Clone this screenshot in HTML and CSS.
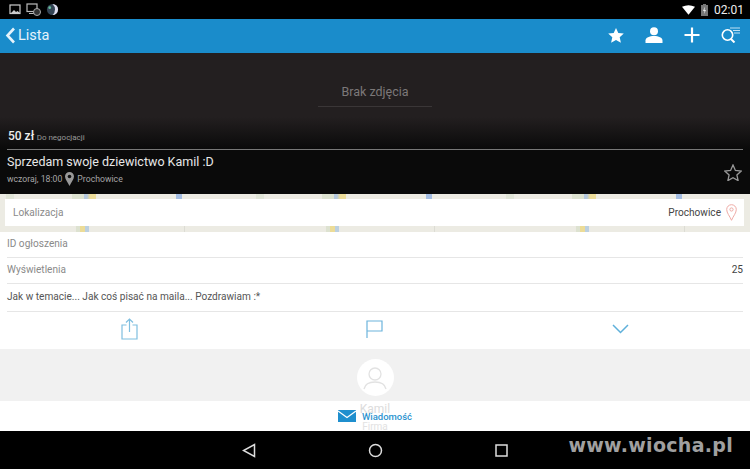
FILE: index.html
```html
<!DOCTYPE html>
<html lang="pl">
<head>
    <meta charset="UTF-8">
    <meta name="viewport" content="width=device-width, initial-scale=1.0">
    <title>Sprzedam swoje dziewictwo Kamil :D</title>
    <link rel="stylesheet" href="styles.css">
</head>
<body>
    <div class="status-bar">
        <div class="status-left">
            <svg width="12" height="11" viewBox="0 0 12 11"><rect x="1" y="1" width="10" height="8.500" fill="none" stroke="#ccc" stroke-width="1.200"/><path d="M2 9l3-3 2 2 1.500-1 2.500 2z" fill="#ccc"/></svg>
            <svg width="15" height="13" viewBox="0 0 15 13"><rect x="1" y="1" width="10" height="7.500" fill="none" stroke="#bbb" stroke-width="1.200"/><path d="M3 10.500h6" stroke="#bbb"/><circle cx="11" cy="9" r="3.500" fill="#333" stroke="#aaa"/></svg>
            <svg width="13" height="13" viewBox="0 0 14 14"><circle cx="7" cy="7" r="6" fill="#345"/><path d="M7 1a6 6 0 0 1 0 12a8 8 0 0 0 0-12z" fill="#dde"/><circle cx="4" cy="5" r="1.500" fill="#6b9"/></svg>
        </div>
        <div class="status-right">
            <svg width="13" height="10" viewBox="0 0 14 10"><path d="M0 1.500Q7-2 14 1.500L7 10z" fill="#fff"/></svg>
            <svg width="7" height="12" viewBox="0 0 7 12"><rect x="0" y="1" width="7" height="11" fill="#777"/><rect x="2" y="0" width="3" height="1" fill="#777"/><path d="M4 2.500L2 7h1.500L3 10l2-4H3.500z" fill="#eee"/></svg>
            <span class="clock">02:01</span>
        </div>
    </div>

    <header class="app-bar">
        <div class="back">
            <svg width="11" height="17" viewBox="0 0 11 17"><path d="M9 1.500L2.500 8.500 9 15.500" fill="none" stroke="#e6f3fb" stroke-width="2.600"/></svg>
            <span>Lista</span>
        </div>
        <div class="actions">
            <svg width="16" height="15" viewBox="0 0 16 15"><path d="M8 0l2.300 5 5.500.6-4.100 3.700 1.200 5.500L8 12l-4.900 2.800 1.200-5.500L.2 5.600 5.700 5z" fill="#fff"/></svg>
            <svg width="18" height="16" viewBox="0 0 18 16"><circle cx="9" cy="4.200" r="4" fill="#fff"/><path d="M.5 16v-2.500C.5 10.500 4.500 9 9 9s8.500 1.500 8.500 4.500V16z" fill="#fff"/></svg>
            <svg width="16" height="16" viewBox="0 0 16 16"><path d="M8 .5v15M.5 8h15" stroke="#fff" stroke-width="2.200"/></svg>
            <svg width="19" height="16" viewBox="0 0 19 16"><circle cx="6.500" cy="8" r="5.200" fill="none" stroke="#fff" stroke-width="1.600"/><path d="M10 12l3.500 3.500" stroke="#fff" stroke-width="2"/><path d="M9 1h10M12 3.500h7M13 6h6" stroke="#bfe0f3" stroke-width="1"/></svg>
        </div>
    </header>

    <section class="hero">
        <div class="no-photo">
            <span>Brak zdjęcia</span>
        </div>
        <div class="price-row"><b>50 zł</b> <small>Do negocjacji</small></div>
        <div class="title-block">
            <div>
                <h1>Sprzedam swoje dziewictwo Kamil :D</h1>
                <div class="meta">
                    <span>wczoraj, 18:00</span>
                    <svg width="9" height="14" viewBox="0 0 9 14"><path d="M4.500 0a4.500 4.500 0 0 1 4.500 4.500C9 7.500 6 10.500 4.500 14 3 10.500 0 7.500 0 4.500A4.500 4.500 0 0 1 4.500 0z" fill="#999"/><circle cx="4.500" cy="4.500" r="1.800" fill="#111"/></svg>
                    <span>Prochowice</span>
                </div>
            </div>
            <svg class="fav" width="18" height="17" viewBox="0 0 18 17"><path d="M9 1l2.400 5.400 5.800.6-4.300 3.900 1.200 5.700L9 13.700l-5.100 2.900 1.200-5.700L.8 7l5.800-.6z" fill="none" stroke="#999" stroke-width="1.300"/></svg>
        </div>
    </section>

    <section class="map-strip">
        <div class="location-box">
            <span class="label">Lokalizacja</span>
            <div class="location-value">
                <span>Prochowice</span>
                <svg width="11" height="17" viewBox="0 0 11 17"><path d="M5.500.7a4.800 4.800 0 0 1 4.800 4.800c0 3.500-3 6.500-4.800 10.800C3.700 12 .7 9 .7 5.500A4.800 4.800 0 0 1 5.500.7z" fill="none" stroke="#eeaaa5"/><circle cx="5.500" cy="5.500" r="1.600" fill="none" stroke="#eeaaa5"/></svg>
            </div>
        </div>
    </section>

    <section class="details">
        <div class="row"><span class="label">ID ogłoszenia</span></div>
        <div class="row"><span class="label">Wyświetlenia</span><span>25</span></div>
        <div class="row description">Jak w temacie... Jak coś pisać na maila... Pozdrawiam :*</div>
    </section>

    <div class="tools">
        <svg width="17" height="22" viewBox="0 0 17 22"><path d="M5.500 7H1v14h15V7h-4.500M8.500 14V1M5 4.500L8.500 1 12 4.500" fill="none" stroke="#7fbfe0" stroke-width="1.200"/></svg>
        <svg width="17" height="18" viewBox="0 0 17 18"><path d="M1 18V1h15v10H1" fill="none" stroke="#6cb4dc" stroke-width="1.200"/></svg>
        <svg width="17" height="10" viewBox="0 0 17 10"><path d="M1 1l7.500 7.500L16 1" fill="none" stroke="#5fb0da" stroke-width="1.500"/></svg>
    </div>

    <section class="seller">
        <div class="avatar">
            <svg width="24" height="24" viewBox="0 0 24 24"><circle cx="12" cy="8" r="6" fill="none" stroke="#e2e2e2" stroke-width="1.300"/><path d="M1 23c1-5 6-7 11-7s10 2 11 7" fill="none" stroke="#e2e2e2" stroke-width="1.300"/></svg>
        </div>
        <div class="seller-name">Kamil</div>
        <div class="seller-type">Firma</div>
        <div class="message-bar">
            <svg width="18" height="12" viewBox="0 0 18 12"><rect width="18" height="12" fill="#1f8fce"/><path d="M0 1l9 6.500L18 1" fill="none" stroke="#fff" stroke-width="1.200"/></svg>
            <span>Wiadomość</span>
        </div>
    </section>

    <nav class="nav-bar">
        <svg width="14" height="15" viewBox="0 0 14 15"><path d="M12.500 1.500v12L1.500 7.500z" fill="none" stroke="#ddd" stroke-width="1.500"/></svg>
        <svg width="15" height="15" viewBox="0 0 15 15"><circle cx="7.500" cy="7.500" r="6" fill="none" stroke="#ddd" stroke-width="1.500"/></svg>
        <svg width="13" height="13" viewBox="0 0 13 13"><rect x="1" y="1" width="11" height="11" fill="none" stroke="#ddd" stroke-width="1.500"/></svg>
    </nav>

    <div class="watermark">www.wiocha.pl</div>
</body>
</html>
```

FILE: styles.css
```css
html, body {
    margin: 0;
    padding: 0;
}
body {
    position: relative;
    width: 750px;
    height: 469px;
    overflow: hidden;
    font-family: Roboto, "Liberation Sans", sans-serif;
    background: #fff;
    color: #444;
}
svg {
    display: block;
    flex: none;
}
.status-bar {
    height: 19px;
    background: #000;
    display: flex;
    justify-content: space-between;
    align-items: center;
    padding: 0 6px 0 9px;
}
.status-left {
    display: flex;
    align-items: center;
    gap: 5px;
}
.status-right {
    display: flex;
    align-items: center;
    gap: 6px;
}
.clock {
    color: #eee;
    font-size: 12px;
}
.app-bar {
    height: 34px;
    background: #1a8ccb;
    display: flex;
    justify-content: space-between;
    align-items: center;
    padding: 0 10px 0 5px;
    box-sizing: border-box;
    color: #e6f3fb;
}
.back {
    display: flex;
    align-items: center;
    gap: 2px;
    font-size: 14.500px;
    padding-bottom: 2px;
}
.actions {
    display: flex;
    align-items: center;
    gap: 21px;
    padding-bottom: 2px;
}
.hero {
    height: 141px;
    background: linear-gradient(#231f20 0, #231f20 64px, #0a0a0a 96px, #0a0a0a 100%);
    color: #eee;
    display: flex;
    flex-direction: column;
}
.no-photo {
    flex: none;
    height: 54px;
    width: 114px;
    margin: 0 auto;
    display: flex;
    align-items: flex-end;
    justify-content: center;
    border-bottom: 1px solid #3a3637;
    color: #7c7879;
    font-size: 12.500px;
    box-sizing: border-box;
    padding-bottom: 7px;
}
.price-row {
    flex: none;
    margin: 19px 7px 0 8px;
    height: 21px;
    font-size: 10px;
    line-height: 21px;
}
.price-row b {
    font-size: 12px;
    font-weight: 500;
}
.price-row small {
    font-size: 8px;
    color: #999;
}
.title-block {
    margin: 2px 7px 0 7px;
    border-top: 1px solid #777;
    display: flex;
    justify-content: space-between;
    align-items: flex-start;
    flex: 1;
}
.title-block h1 {
    margin: 0;
    font-size: 12.500px;
    font-weight: 400;
    color: #e8e8e8;
    line-height: 18px;
    padding-top: 3px;
}
.meta {
    display: flex;
    align-items: center;
    gap: 3px;
    margin-top: 1px;
    font-size: 8.700px;
    color: #a5a5a5;
}
.fav {
    margin: 14px 1px 0 0;
}
.map-strip {
    height: 38px;
    padding: 5px 6px 6px 5px;
    box-sizing: border-box;
    background:
        repeating-linear-gradient(90deg, transparent 0 6px, #e0e4d6 6px 14px, transparent 14px 72px, #dde2d0 72px 84px, #b4c8de 84px 87px, #ecdc98 90px 96px, transparent 96px 176px, #a4bde2 176px 182px, transparent 182px 250px) 0 0 / 100% 5px no-repeat,
        repeating-linear-gradient(90deg, transparent 0 76px, #dde2d0 76px 80px, #ecdc98 80px 85px, #bcd0e0 85px 89px, transparent 89px 184px, #dcdcd4 184px 185px, transparent 185px 250px) 0 100% / 100% 6px no-repeat,
        #ecebe3;
}
.location-box {
    height: 27px;
    background: #fff;
    display: flex;
    justify-content: space-between;
    align-items: center;
    padding: 0 7px 0 8px;
    box-sizing: border-box;
    font-size: 10.100px;
}
.location-value {
    display: flex;
    align-items: center;
    gap: 5px;
    color: #444;
}
.label {
    color: #8a8a8a;
}
.details {
    padding: 0 7px;
    font-size: 10.100px;
}
.row {
    height: 26px;
    border-bottom: 1px solid #e6e6e6;
    padding-bottom: 2px;
    box-sizing: border-box;
    display: flex;
    justify-content: space-between;
    align-items: center;
}
.description {
    height: 28px;
    color: #555;
}
.tools {
    height: 37px;
    display: grid;
    grid-template-columns: 245px 246px 1fr;
    align-items: center;
    padding-left: 121px;
    padding-bottom: 3px;
    box-sizing: border-box;
}
.seller {
    position: relative;
    height: 82px;
    background: linear-gradient(#f1f1f1 0, #f1f1f1 52px, #fff 52px);
    text-align: center;
    padding-top: 10px;
    box-sizing: border-box;
    overflow: hidden;
}
.avatar {
    width: 37px;
    height: 37px;
    border-radius: 50%;
    background: #fff;
    margin: 0 auto;
    display: flex;
    align-items: center;
    justify-content: center;
}
.seller-name {
    color: #dcdcdc;
    font-size: 12px;
    line-height: 14px;
    margin-top: 6px;
}
.seller-type {
    color: #e2e2e2;
    font-size: 10px;
    line-height: 12px;
    margin-top: 5px;
}
.message-bar {
    position: absolute;
    left: 0;
    right: 0;
    top: 61px;
    display: flex;
    justify-content: center;
    align-items: center;
    gap: 6px;
    color: #2c93cf;
    font-size: 9.500px;
    font-weight: 500;
}
.nav-bar {
    height: 38px;
    background: #000;
    display: grid;
    grid-template-columns: 126px 127px 1fr;
    align-items: center;
    padding-left: 242px;
}
.watermark {
    position: absolute;
    right: 17px;
    bottom: 13px;
    font-family: "DejaVu Sans", sans-serif;
    font-weight: 700;
    font-size: 19px;
    letter-spacing: .3px;
    color: #a0a0a0;
}
```
